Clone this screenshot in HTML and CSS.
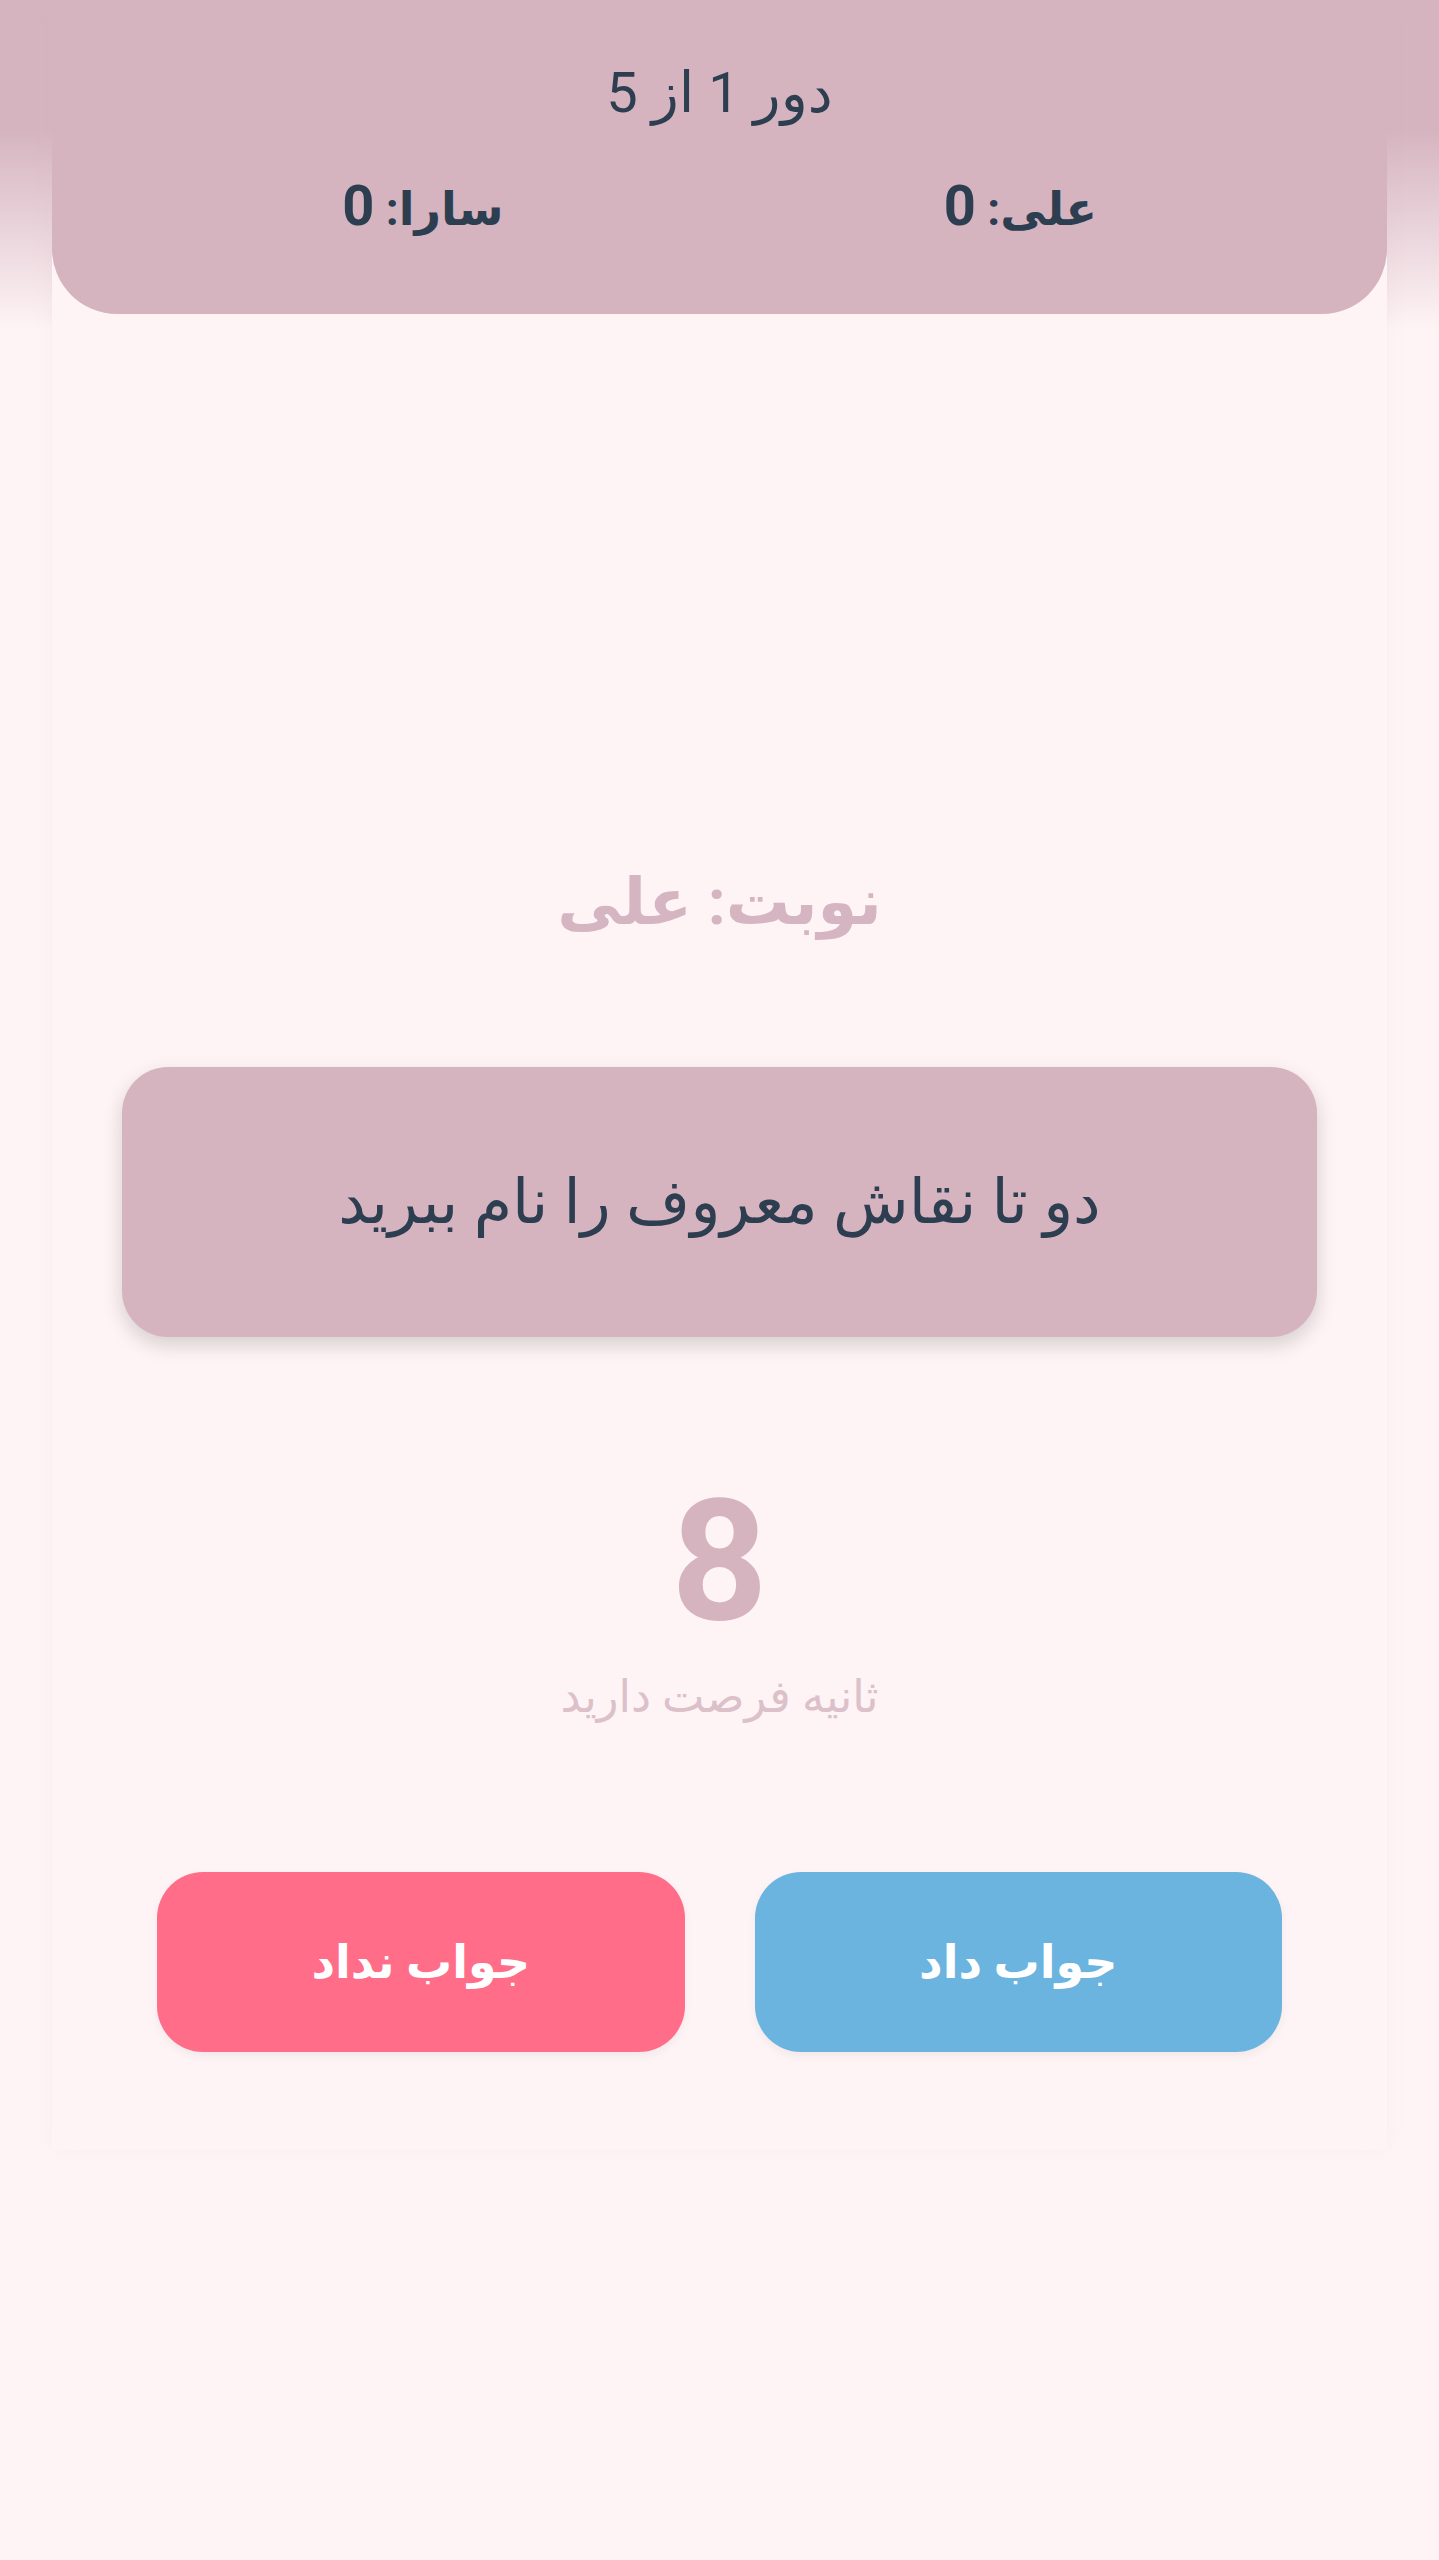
FILE: index.html
```html
<!DOCTYPE html>
<html lang="fa" dir="rtl">
<head>
<meta charset="utf-8">
<title>بازی</title>
<link rel="stylesheet" href="styles.css">
</head>
<body>
<div class="app">
  <header class="scoreboard">
    <div class="round">دور 1 از 5</div>
    <div class="scores">
      <div class="score">علی: <span class="score-num">0</span></div>
      <div class="score">سارا: <span class="score-num">0</span></div>
    </div>
  </header>
  <main class="play">
    <h2 class="turn">نوبت: علی</h2>
    <div class="question-card">
      <p class="question">دو تا نقاش معروف را نام ببرید</p>
    </div>
    <div class="timer">
      <div class="timer-value">8</div>
      <div class="timer-label">ثانیه فرصت دارید</div>
    </div>
    <div class="actions">
      <button class="btn btn-yes">جواب داد</button>
      <button class="btn btn-no">جواب نداد</button>
    </div>
  </main>
</div>
</body>
</html>
```
FILE: styles.css
```css
html, body {
  margin: 0;
  padding: 0;
}
body {
  min-height: 2560px;
  background: linear-gradient(to bottom, #d5b4c0 0px, #d5b4c0 130px, #fef4f6 330px, #fef4f6 100%);
  font-family: Roboto, "DejaVu Sans", sans-serif;
  color: #2c3e50;
}
.app {
  width: 1335px;
  margin: 0 auto;
  background: #fef4f6;
  box-shadow: 0 0 20px rgba(213, 180, 192, 0.12);
  padding-bottom: 98px;
}
.scoreboard {
  background: #d5b4c0;
  border-radius: 0 0 65px 65px;
  padding: 58px 70px 65px;
  text-align: center;
}
.round {
  font-size: 56px;
  line-height: 70px;
  height: 70px;
}
.scores {
  display: flex;
  justify-content: space-around;
  margin-top: 41px;
  height: 80px;
}
.score {
  font-size: 46px;
  font-weight: 700;
  line-height: 80px;
  height: 80px;
}
.score-num {
  font-size: 56px;
  line-height: 1;
}
.play {
  padding: 0 70px;
  text-align: center;
}
.turn {
  margin: 544px 0 0;
  font-size: 64px;
  line-height: 90px;
  font-weight: 700;
  color: #d6b5c2;
}
.question-card {
  margin-top: 119px;
  height: 270px;
  background: #d5b4c0;
  border-radius: 46px;
  box-shadow: 0 8px 20px rgba(0, 0, 0, 0.16);
  display: flex;
  align-items: center;
  justify-content: center;
}
.question {
  margin: 0;
  font-size: 62px;
  line-height: 90px;
  color: #2c3e50;
}
.timer {
  margin-top: 141px;
}
.timer-value {
  font-size: 168px;
  line-height: 168px;
  font-weight: 700;
  color: #d5b4c0;
}
.timer-label {
  margin-top: 21px;
  font-size: 45px;
  line-height: 60px;
  color: #dcc0ca;
}
.actions {
  display: flex;
  gap: 70px;
  padding: 0 35px;
  margin-top: 145px;
}
.btn {
  flex: 1;
  height: 180px;
  border: none;
  border-radius: 46px;
  font-family: Roboto, "DejaVu Sans", sans-serif;
  font-size: 46px;
  font-weight: 700;
  color: #ffffff;
  box-shadow: 0 4px 10px rgba(0, 0, 0, 0.05);
  cursor: pointer;
}
.btn-yes {
  background: #6cb4e0;
}
.btn-no {
  background: #ff6d89;
}
```
